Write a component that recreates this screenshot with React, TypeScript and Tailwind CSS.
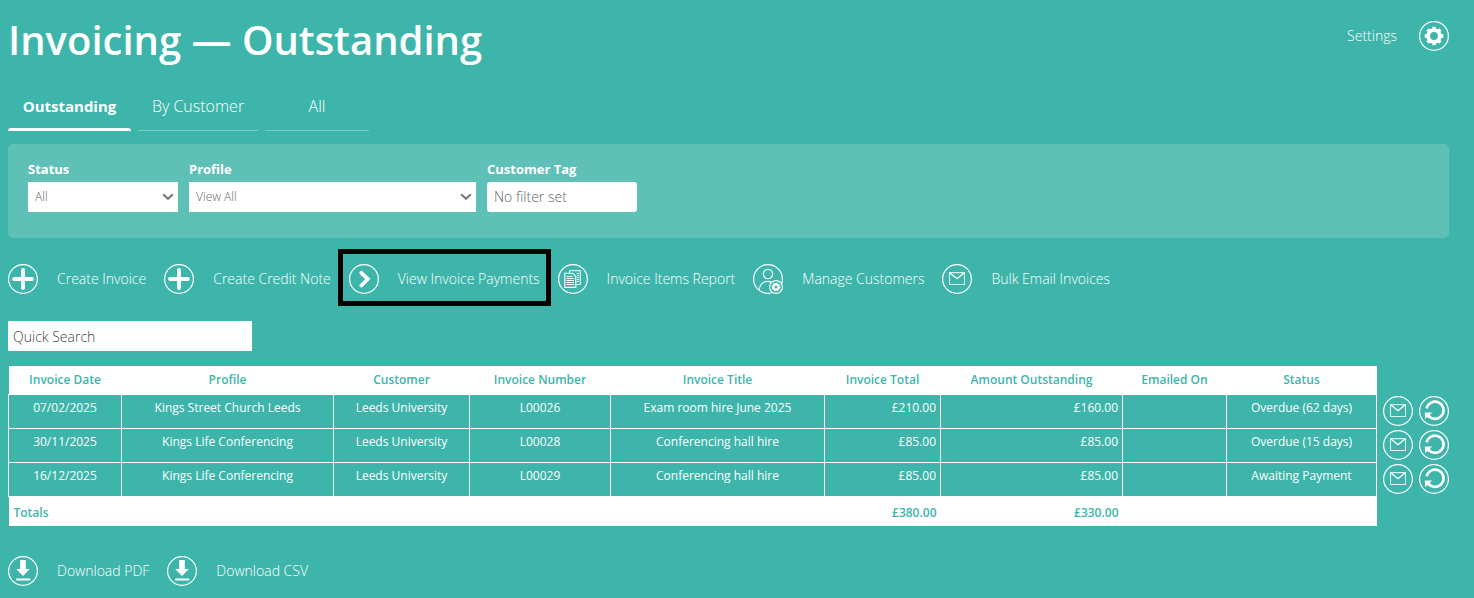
import type { ReactNode } from 'react';
import clsx from 'clsx';

const tabs = [
  { label: 'Outstanding', width: 'w-[123px]', active: true },
  { label: 'By Customer', width: 'w-[120px]', active: false },
  { label: 'All', width: 'w-[104px]', active: false }
];

const columns = [
  { label: 'Invoice Date', width: 'w-[113px]' },
  { label: 'Profile', width: 'w-[212px]' },
  { label: 'Customer', width: 'w-[136px]' },
  { label: 'Invoice Number', width: 'w-[141px]' },
  { label: 'Invoice Title', width: 'w-[214px]' },
  { label: 'Invoice Total', width: 'w-[116px]' },
  { label: 'Amount Outstanding', width: 'w-[182px]' },
  { label: 'Emailed On', width: 'w-[104px]' },
  { label: 'Status', width: 'w-[150px]' }
];

const invoices = [
  ['07/02/2025', 'Kings Street Church Leeds', 'Leeds University', 'L00026', 'Exam room hire June 2025', '£210.00', '£160.00', '', 'Overdue (62 days)'],
  ['30/11/2025', 'Kings Life Conferencing', 'Leeds University', 'L00028', 'Conferencing hall hire', '£85.00', '£85.00', '', 'Overdue (15 days)'],
  ['16/12/2025', 'Kings Life Conferencing', 'Leeds University', 'L00029', 'Conferencing hall hire', '£85.00', '£85.00', '', 'Awaiting Payment']
];

function CircleIcon({ children }: { children: ReactNode }) {
  return (
    <svg viewBox="0 0 30 30" fill="none" stroke="#fff" className="block size-[30px] shrink-0" aria-hidden="true">
      <circle cx="15" cy="15" r="14.4" strokeWidth="1.2" />
      {children}
    </svg>
  );
}

function PlusIcon() {
  return (
    <CircleIcon>
      <path d="M15 6v18M6 15h18" strokeWidth="3.8" strokeLinecap="round" />
    </CircleIcon>
  );
}

function ChevronIcon() {
  return (
    <CircleIcon>
      <path d="M12.3 8.8 18.8 15l-6.5 6.5" strokeWidth="3.8" strokeLinecap="round" />
    </CircleIcon>
  );
}

function ReportIcon() {
  return (
    <CircleIcon>
      <path d="M11.5 9V6.7h10.8v13.8h-4" strokeWidth="1" />
      <path d="M6.8 9.4h8l3 2.8v11.2h-11z" strokeWidth="1.1" />
      <path d="M8.5 12.5h6M8.5 14.5h7.5M8.5 16.5h7.5M8.5 18.5h7.5M8.5 20.5h7.5M18.5 9.5h2.5M19 11.5h2M19 13.5h2M19 15.5h2M19 17.5h2" strokeWidth="1" />
    </CircleIcon>
  );
}

function CustomersIcon() {
  return (
    <CircleIcon>
      <circle cx="15" cy="10" r="4.6" strokeWidth="1.2" />
      <path d="M6.3 26c.4-5.4 3.8-8.6 8.4-8.6 1.5 0 2.7.3 3.7.8" strokeWidth="1.2" />
      <circle cx="23" cy="23" r="6.4" fill="#3db5ab" strokeWidth="1.1" />
      <circle cx="23" cy="23" r="2.7" strokeWidth="2.2" />
      <circle cx="23" cy="23" r="3.9" strokeWidth="1" strokeDasharray="1.5 1.56" />
    </CircleIcon>
  );
}

function MailIcon() {
  return (
    <CircleIcon>
      <path d="M7.5 8.6h15v11.9h-15z" strokeWidth="1.1" strokeOpacity="0.8" />
      <path d="m8 9 7 5.7L22 9" strokeWidth="1.3" />
    </CircleIcon>
  );
}

function RefreshIcon() {
  return (
    <CircleIcon>
      <path d="M7.6 12.4A8.6 8.6 0 1 1 9.6 20" strokeWidth="2.6" />
      <path d="M5.8 16.6h7.4l-2.3 2.2 1 1.6-2.2 1.8-1.4-1.2-2.2 2z" fill="#fff" stroke="none" />
    </CircleIcon>
  );
}

function DownloadIcon() {
  return (
    <CircleIcon>
      <path d="M12.2 4h5.6v9h4L15 20l-6.8-7h4z" fill="#fff" stroke="none" />
      <path d="M9 23.5h12.5" strokeWidth="2" strokeLinecap="round" />
    </CircleIcon>
  );
}

function GearIcon() {
  return (
    <CircleIcon>
      <circle cx="15" cy="15" r="5.8" strokeWidth="3.8" />
      <path
        d="M15 8.5V5.7M15 24.3v-2.8M8.5 15H5.7M24.3 15h-2.8M10.4 10.4 8.5 8.5M21.5 21.5l-1.9-1.9M10.4 19.6l-1.9 1.9M21.5 8.5l-1.9 1.9"
        strokeWidth="3.4"
      />
    </CircleIcon>
  );
}

function Action({ icon, label, highlighted }: { icon: ReactNode; label: string; highlighted?: boolean }) {
  return (
    <button type="button" className="relative flex cursor-pointer items-center gap-[19px] whitespace-nowrap text-sm font-light">
      {icon}
      <span>{label}</span>
      {highlighted && <span className="absolute -inset-x-[11px] -top-[15px] -bottom-3 border-5 border-black"></span>}
    </button>
  );
}

function SelectArrow() {
  return (
    <svg viewBox="0 0 12 8" fill="none" stroke="#777" strokeWidth="2" className="pointer-events-none absolute top-[11px] right-1 h-2 w-3" aria-hidden="true">
      <path d="m1.2 1.2 4.8 4.6 4.8-4.6" />
    </svg>
  );
}

export default function App() {
  return (
    <div className="min-h-screen bg-[#3db5ab] pr-[25px] pl-2 font-['Open_Sans',sans-serif] text-white">
      <header className="flex items-start justify-between pt-3">
        <h1 className="text-[40px] leading-14 font-semibold">Invoicing — Outstanding</h1>
        <button type="button" className="mt-[9px] flex cursor-pointer items-center gap-[22px] text-sm font-light">
          <span>Settings</span>
          <GearIcon />
        </button>
      </header>

      {/* Tabs */}
      <nav className="mt-[27px] flex gap-[7px]">
        {tabs.map((tab) => (
          <a
            key={tab.label}
            href="#"
            className={clsx('flex h-9 flex-col justify-between text-center leading-[22px]', tab.width, tab.active ? 'text-[15px] font-bold' : 'text-[16px] font-light')}
          >
            {tab.label}
            <span className={clsx('block', tab.active ? 'h-[3px] rounded-t-[3px] bg-white' : 'h-px bg-white/30')}></span>
          </a>
        ))}
      </nav>

      {/* Filters */}
      <section className="mt-[13px] flex gap-[11px] rounded-[5px] bg-[#5fc0b8] px-5 pt-4 pb-[26px] text-[13px]">
        <div>
          <label htmlFor="status" className="block h-[22px] leading-[18px] font-bold">Status</label>
          <div className="relative">
            <select id="status" className="block h-[30px] w-[150px] appearance-none bg-white px-[7px] text-[12px] font-light text-[#666]">
              <option>All</option>
            </select>
            <SelectArrow />
          </div>
        </div>
        <div>
          <label htmlFor="profile" className="block h-[22px] leading-[18px] font-bold">Profile</label>
          <div className="relative">
            <select id="profile" className="block h-[30px] w-[287px] appearance-none bg-white px-[7px] text-[12px] font-light text-[#666]">
              <option>View All</option>
            </select>
            <SelectArrow />
          </div>
        </div>
        <div>
          <label htmlFor="tag" className="block h-[22px] leading-[18px] font-bold">Customer Tag</label>
          <input
            id="tag"
            type="text"
            placeholder="No filter set"
            className="block h-[30px] w-[150px] rounded-[3px] bg-white px-[7px] pb-[2px] text-sm font-light placeholder:text-[#666]"
          />
        </div>
      </section>

      {/* Actions */}
      <div className="mt-[26px] flex flex-wrap gap-x-[18px] gap-y-3">
        <Action icon={<PlusIcon />} label="Create Invoice" />
        <Action icon={<PlusIcon />} label="Create Credit Note" />
        <Action icon={<ChevronIcon />} label="View Invoice Payments" highlighted />
        <Action icon={<ReportIcon />} label="Invoice Items Report" />
        <Action icon={<CustomersIcon />} label="Manage Customers" />
        <Action icon={<MailIcon />} label="Bulk Email Invoices" />
      </div>

      <input
        type="text"
        aria-label="Quick Search"
        placeholder="Quick Search"
        className="mt-[27px] block h-[30px] w-[244px] bg-white px-[5px] text-sm font-light placeholder:text-[#444]"
      />

      {/* Invoices */}
      <table className="mt-[15px] w-full table-fixed border-collapse text-[12px] leading-4">
        <thead>
          <tr className="h-7 text-[#3db5ab]">
            {columns.map((column) => (
              <th key={column.label} className={clsx('bg-white font-semibold', column.width)}>{column.label}</th>
            ))}
            <td className="w-[73px]"></td>
          </tr>
        </thead>
        <tbody>
          {invoices.map((invoice) => (
            <tr key={invoice[3]} className="h-[34px] align-top">
              {invoice.map((value, index) => (
                <td
                  key={index}
                  className={clsx('border border-white px-1 pt-[5px]', index === 5 || index === 6 ? 'text-right' : 'text-center')}
                >
                  {value}
                </td>
              ))}
              <td className="pt-[2px] pb-[2px] pl-[6px]">
                <div className="flex gap-[6px]">
                  <button type="button" aria-label="Email invoice" className="cursor-pointer">
                    <MailIcon />
                  </button>
                  <button type="button" aria-label="Update invoice" className="cursor-pointer">
                    <RefreshIcon />
                  </button>
                </div>
              </td>
            </tr>
          ))}
        </tbody>
        <tfoot>
          <tr className="h-[30px] text-[#3db5ab]">
            <th colSpan={5} className="bg-white px-[5px] pt-[3px] text-left font-semibold">Totals</th>
            <td className="bg-white px-1 pt-[3px] text-right font-semibold">£380.00</td>
            <td className="bg-white px-1 pt-[3px] text-right font-semibold">£330.00</td>
            <td colSpan={2} className="bg-white"></td>
            <td></td>
          </tr>
        </tfoot>
      </table>

      {/* Downloads */}
      <div className="mt-[30px] flex gap-[18px] pb-3">
        <Action icon={<DownloadIcon />} label="Download PDF" />
        <Action icon={<DownloadIcon />} label="Download CSV" />
      </div>
    </div>
  );
}
